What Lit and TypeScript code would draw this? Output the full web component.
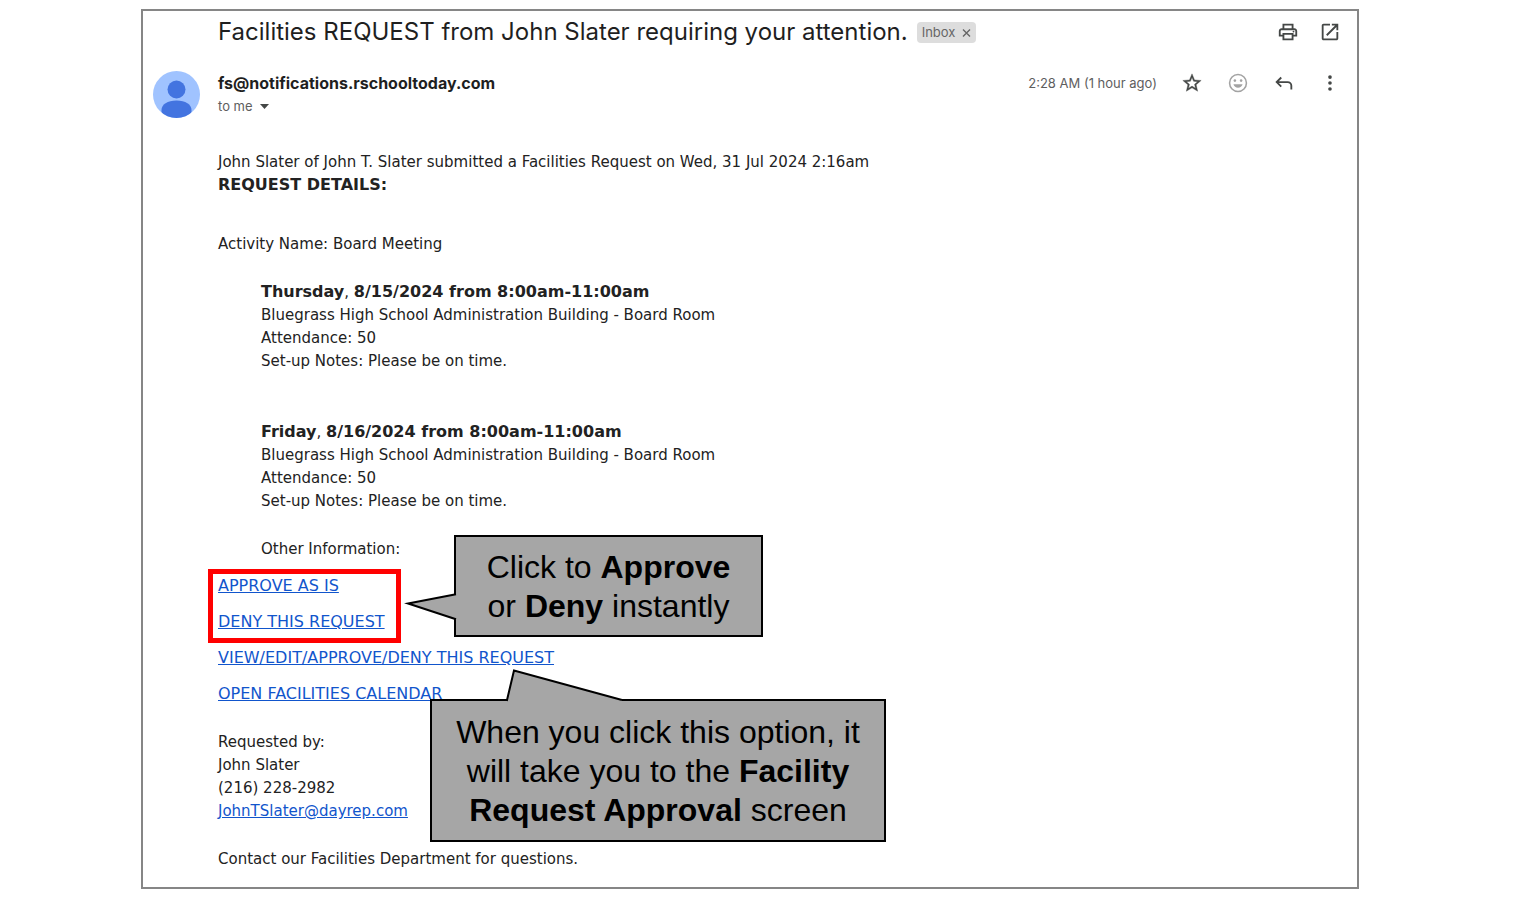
import { LitElement, html, svg, css } from "lit";
import { customElement, property } from "lit/decorators.js";

interface Booking {
  day: string;
  when: string;
  place: string;
  attendance: number;
  notes: string;
}

const BOOKINGS: Booking[] = [
  {
    day: "Thursday",
    when: "8/15/2024 from 8:00am-11:00am",
    place: "Bluegrass High School Administration Building - Board Room",
    attendance: 50,
    notes: "Please be on time.",
  },
  {
    day: "Friday",
    when: "8/16/2024 from 8:00am-11:00am",
    place: "Bluegrass High School Administration Building - Board Room",
    attendance: 50,
    notes: "Please be on time.",
  },
];

const ICONS = {
  print: svg`<path fill="currentColor" d="M19 8h-1V3H6v5H5c-1.66 0-3 1.34-3 3v6h4v4h12v-4h4v-6c0-1.66-1.34-3-3-3zM8 5h8v3H8V5zm8 14H8v-4h8v4zm2-4v-2H6v2H4v-4c0-.55.45-1 1-1h14c.55 0 1 .45 1 1v4h-2z"/><circle cx="18" cy="11.5" r="1" fill="currentColor"/>`,
  open: svg`<path fill="currentColor" d="M19 19H5V5h7V3H5c-1.11 0-2 .9-2 2v14c0 1.1.89 2 2 2h14c1.1 0 2-.9 2-2v-7h-2v7zM14 3v2h3.59l-9.83 9.83 1.41 1.41L19 6.41V10h2V3h-7z"/>`,
  star: svg`<path fill="currentColor" stroke="currentColor" stroke-width=".4" d="M22 9.24l-7.19-.62L12 2 9.19 8.63 2 9.24l5.46 4.73L5.82 21 12 17.27 18.18 21l-1.63-7.03L22 9.24zM12 15.4l-3.76 2.27 1-4.28-3.32-2.88 4.38-.38L12 6.1l1.71 4.04 4.38.38-3.32 2.88 1 4.28L12 15.4z"/>`,
  smile: svg`<circle cx="12" cy="12" r="9.2" fill="none" stroke="currentColor" stroke-width="1.7"/><circle cx="8.6" cy="9.4" r="1.4" fill="currentColor"/><circle cx="15.4" cy="9.4" r="1.4" fill="currentColor"/><path fill="currentColor" d="M7 13.4h10c-.7 2.4-2.6 3.9-5 3.9s-4.3-1.5-5-3.9z"/>`,
  reply: svg`<path fill="none" stroke="currentColor" stroke-width="2" d="M9 6l-5 5 5 5M4.5 11H16a4 4 0 0 1 4 4v4"/>`,
  more: svg`<circle cx="12" cy="5.5" r="2" fill="currentColor"/><circle cx="12" cy="12" r="2" fill="currentColor"/><circle cx="12" cy="18.5" r="2" fill="currentColor"/>`,
};

@customElement("icon-button")
class IconButton extends LitElement {
  @property() icon: keyof typeof ICONS = "more";
  @property() label = "";

  static styles = css`
    :host {
      display: block;
      color: #444746;
    }
    :host([muted]) {
      color: #a3a3a3;
    }
    .button {
      display: block;
      padding: 0;
      border: 0;
      background: none;
      color: inherit;
      cursor: pointer;
    }
    .glyph {
      display: block;
      width: 22px;
      height: 22px;
    }
  `;

  render() {
    return html`<button class="button" type="button" aria-label=${this.label}>
      <svg class="glyph" viewBox="0 0 24 24" aria-hidden="true">${ICONS[this.icon]}</svg>
    </button>`;
  }
}

@customElement("app-root")
class AppRoot extends LitElement {
  static styles = css`
    :host {
      display: block;
      box-sizing: border-box;
      padding: 9px 157px 9px 141px;
      background: #fff;
      color: #222;
      font-family: "DejaVu Sans", Verdana, sans-serif;
      font-size: 15px;
      line-height: 23px;
    }
    .frame {
      border: 2px solid #868686;
      padding: 0 16px 16px 10px;
    }
    .subject-row {
      display: flex;
      align-items: center;
      gap: 9px;
      min-height: 42px;
      padding-left: 65px;
      font-family: Inter, sans-serif;
    }
    .subject {
      margin: 0;
      font-size: 24px;
      font-weight: 400;
      line-height: 32px;
      color: #1f1f1f;
    }
    .chip {
      display: flex;
      align-items: center;
      gap: 7px;
      height: 21px;
      padding: 0 5px;
      border-radius: 4px;
      background: #ddd;
      color: #666;
      font-size: 13px;
    }
    .chip-remove {
      padding: 0;
      border: 0;
      background: none;
      color: inherit;
    }
    .chip-cross {
      display: block;
      width: 9px;
      height: 9px;
    }
    .tools {
      display: flex;
      gap: 20px;
      margin-left: auto;
    }
    .sender-row {
      display: flex;
      align-items: flex-start;
      gap: 18px;
      margin-top: 18px;
      font-family: Inter, sans-serif;
      font-size: 13px;
      color: #5e5e5e;
    }
    .avatar {
      flex: none;
      width: 47px;
      height: 47px;
    }
    .sender {
      font-size: 16px;
      font-weight: 700;
      line-height: 24px;
      color: #1f1f1f;
    }
    .recipient {
      display: flex;
      align-items: center;
      gap: 7px;
      padding: 0;
      border: 0;
      background: none;
      color: inherit;
      font: inherit;
      line-height: 22px;
    }
    .caret {
      width: 9px;
      height: 5px;
    }
    .message-tools {
      display: flex;
      align-items: center;
      gap: 24px;
      min-height: 24px;
      margin-left: auto;
    }
    .body {
      position: relative;
      margin: 33px 0 0 65px;
    }
    p {
      margin: 0;
    }
    strong {
      font-size: 16px;
      line-height: 20px;
    }
    .link {
      display: block;
      width: fit-content;
      font-size: 16px;
      color: #1155cc;
      text-decoration: underline;
    }
    .email {
      font-size: 15px;
    }
    .activity {
      margin-top: 36px;
    }
    .bookings {
      display: grid;
      gap: 48px;
      margin: 25px 0 25px 43px;
    }
    .other {
      margin-left: 43px;
    }
    .links {
      display: grid;
      justify-items: start;
      gap: 13px;
      margin: 13px 0 26px;
    }
    .decisions {
      position: relative;
      display: grid;
      gap: 13px;
    }
    .highlight {
      position: absolute;
      inset: -5px -16px -10px -10px;
      border: 5px solid #f00;
      pointer-events: none;
    }
    .contact {
      margin-top: 25px;
    }
    .callout {
      position: absolute;
      display: grid;
      place-items: center;
      box-sizing: border-box;
      padding-top: 2px;
      border: 2px solid #000;
      background: #a6a6a6;
      color: #000;
      font-family: "Liberation Sans", Arial, sans-serif;
      font-size: 32px;
      line-height: 39px;
      text-align: center;
    }
    .callout strong {
      font-size: 32px;
      line-height: 39px;
    }
    .callout-decide {
      left: 236px;
      top: 384px;
      width: 309px;
      height: 102px;
    }
    .callout-view {
      left: 212px;
      top: 548px;
      width: 456px;
      height: 143px;
    }
    .tail {
      position: absolute;
      fill: #a6a6a6;
    }
    .tail-edge {
      fill: none;
      stroke: #000;
      stroke-width: 2;
    }
    .tail-left {
      left: -52px;
      top: 55px;
      width: 54px;
      height: 30px;
    }
    .tail-up {
      left: 72px;
      top: -33px;
      width: 124px;
      height: 34px;
    }
  `;

  private booking(b: Booking) {
    return html`<section>
      <p><strong>${b.day}</strong>, <strong>${b.when}</strong></p>
      <p>${b.place}</p>
      <p>Attendance: ${b.attendance}</p>
      <p>Set-up Notes: ${b.notes}</p>
    </section>`;
  }

  render() {
    return html`<article class="frame">
      <header>
        <div class="subject-row">
          <h1 class="subject">Facilities REQUEST from John Slater requiring your attention.</h1>
          <span class="chip">Inbox
            <button class="chip-remove" type="button" aria-label="Remove label Inbox">
              <svg class="chip-cross" viewBox="0 0 9 9" aria-hidden="true"><path d="M1 1.500l7 7M8 1.500l-7 7" stroke="currentColor" stroke-width="1.4" /></svg>
            </button>
          </span>
          <div class="tools">
            <icon-button icon="print" label="Print"></icon-button>
            <icon-button icon="open" label="Open in new window"></icon-button>
          </div>
        </div>
        <div class="sender-row">
          <svg class="avatar" viewBox="0 0 47 47" aria-hidden="true">
            <defs><clipPath id="disc"><circle cx="23.5" cy="23.5" r="23.5" /></clipPath></defs>
            <g clip-path="url(#disc)">
              <rect width="47" height="47" fill="#a0c3ff" />
              <circle cx="23.5" cy="18.5" r="9" fill="#4374e0" />
              <path d="M8.5 39c0-5.500 6-9.500 15-9.500s15 4 15 9.500v8h-30z" fill="#4374e0" />
            </g>
          </svg>
          <div>
            <div class="sender">fs@notifications.rschooltoday.com</div>
            <button class="recipient" type="button">to me
              <svg class="caret" viewBox="0 0 9 5" aria-hidden="true"><path d="M0 0h9L4.5 5z" fill="#444746" /></svg>
            </button>
          </div>
          <div class="message-tools">
            <time>2:28 AM (1 hour ago)</time>
            <icon-button icon="star" label="Star"></icon-button>
            <icon-button icon="smile" label="Add reaction" muted></icon-button>
            <icon-button icon="reply" label="Reply"></icon-button>
            <icon-button icon="more" label="More"></icon-button>
          </div>
        </div>
      </header>

      <div class="body">
        <p>John Slater of John T. Slater submitted a Facilities Request on Wed, 31 Jul 2024 2:16am</p>
        <p><strong>REQUEST DETAILS:</strong></p>
        <p class="activity">Activity Name: Board Meeting</p>
        <div class="bookings">${BOOKINGS.map((b) => this.booking(b))}</div>
        <p class="other">Other Information:</p>
        <nav class="links">
          <div class="decisions">
            <a class="link" href="#approve">APPROVE AS IS</a>
            <a class="link" href="#deny">DENY THIS REQUEST</a>
            <div class="highlight"></div>
          </div>
          <a class="link" href="#view">VIEW/EDIT/APPROVE/DENY THIS REQUEST</a>
          <a class="link" href="#calendar">OPEN FACILITIES CALENDAR</a>
        </nav>
        <p>Requested by:</p>
        <p>John Slater</p>
        <p>(216) 228-2982</p>
        <a class="link email" href="mailto:JohnTSlater@dayrep.com">JohnTSlater@dayrep.com</a>
        <p class="contact">Contact our Facilities Department for questions.</p>

        <aside class="callout callout-decide">
          <svg class="tail tail-left" viewBox="0 0 54 30" aria-hidden="true">
            <path d="M52 2.5H51L4 11.5 51 27h1z" />
            <path class="tail-edge" d="M52 2.3L4 11.5 52 27.3" />
          </svg>
          <div>Click to <strong>Approve</strong><br />or <strong>Deny</strong> instantly</div>
        </aside>
        <aside class="callout callout-view">
          <svg class="tail tail-up" viewBox="0 0 124 34" aria-hidden="true">
            <path d="M3 33V32L10 2.5 118 32v1z" />
            <path class="tail-edge" d="M2.8 33L10 2.5 118 32" />
          </svg>
          <div>When you click this option, it<br />will take you to the <strong>Facility<br />Request Approval</strong> screen</div>
        </aside>
      </div>
    </article>`;
  }
}
